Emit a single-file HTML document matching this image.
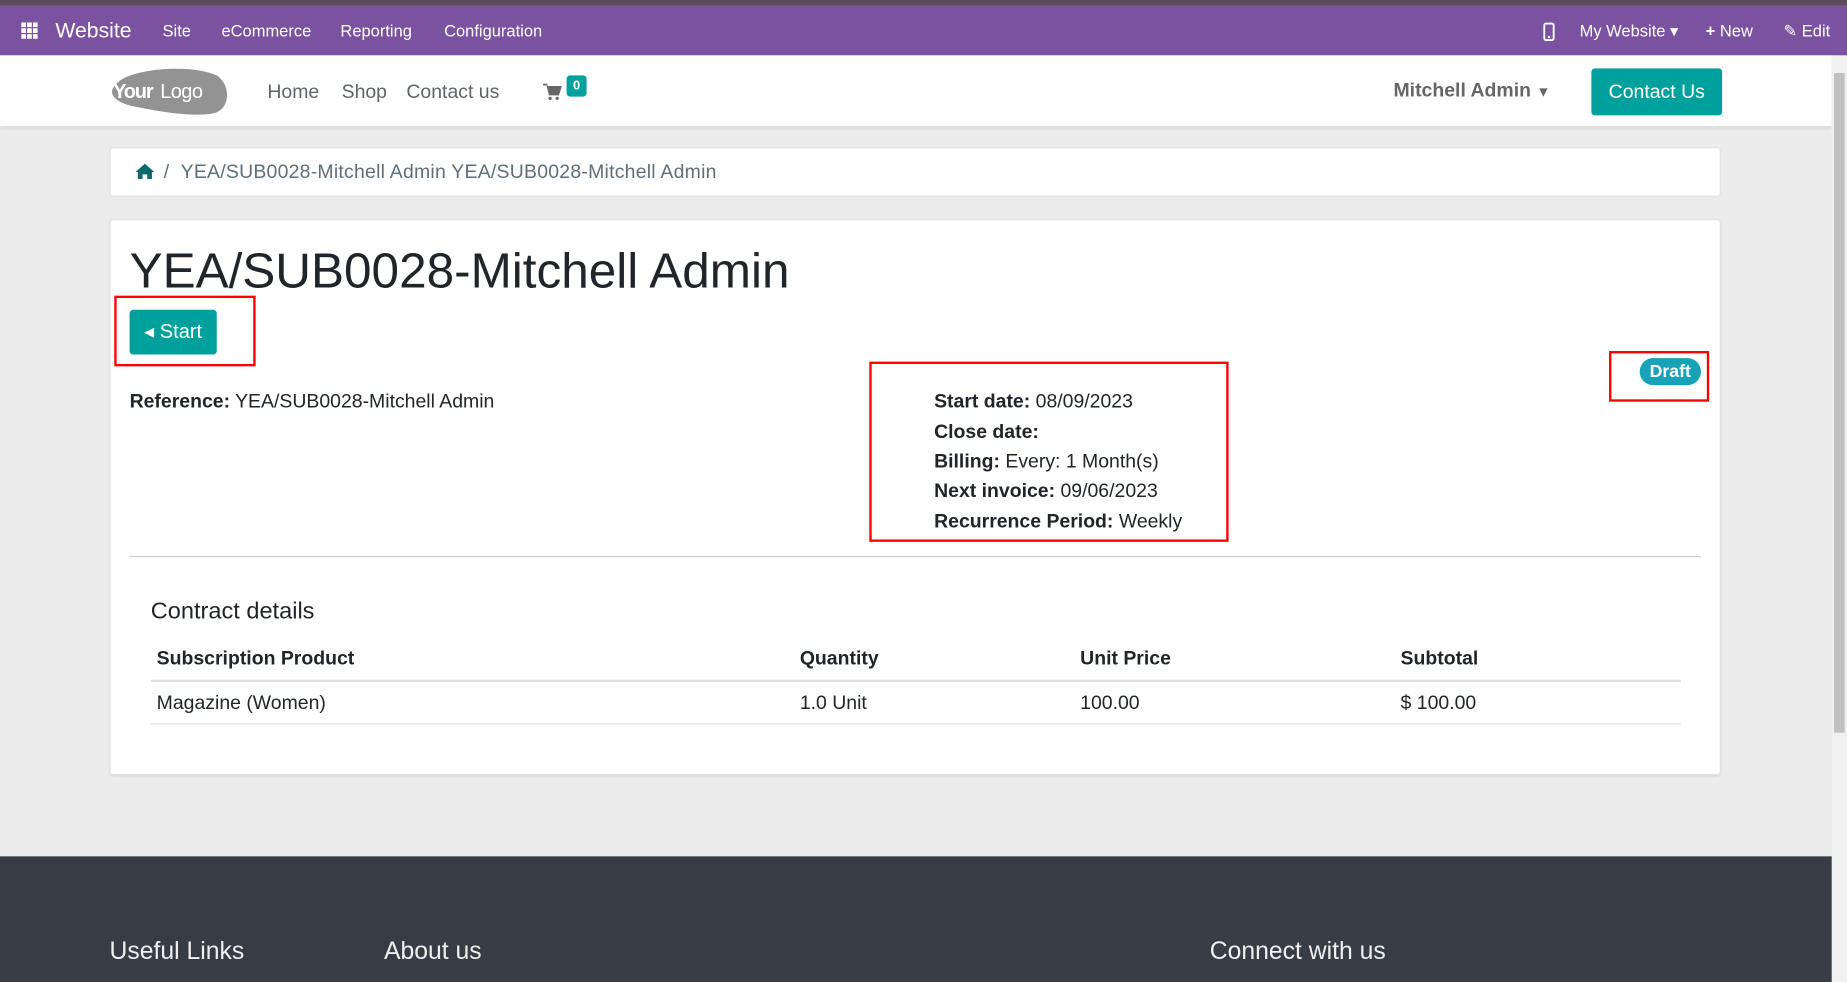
<!DOCTYPE html>
<html><head><meta charset="utf-8"><style>
*{box-sizing:border-box;margin:0;padding:0}
html,body{width:1847px;height:982px;overflow:hidden;background:#ececec}
#w{width:1568px;height:834px;transform:scale(1.17793);transform-origin:0 0;position:relative;font-family:"Liberation Sans",sans-serif;background:#ececec;color:#212529}
.a{position:absolute;white-space:nowrap}
.top{left:0;top:0;width:1568px;height:5px;background:#5b4a5c}
.bar{left:0;top:5px;width:1568px;height:42px;background:#7a52a0;color:#fff;font-size:14px}
.bar .a{top:13px}
.hdr{left:0;top:47px;width:1555px;height:60px;background:#fff;box-shadow:0 2px 3px rgba(0,0,0,.08)}
.sb{left:1555px;top:47px;width:13px;height:787px;background:#f0f0f0}
.sbt{left:1557px;top:62px;width:9px;height:560px;background:#c1c1c1}
.nav{font-size:16.5px;color:#5f636b;top:69px}
.card{background:#fff;border:1px solid #e2e2e2;border-radius:3px}
.red{border:2px solid #f00}
.l{font-size:16.5px;color:#212529}
b{font-weight:bold}
.foot{left:0;top:727px;width:1555px;height:107px;background:#383c44}
.fh{top:796px;font-size:21px;color:#f0f0f0}
</style></head><body><div id="w">
<div class="a top"></div>
<div class="a bar">
 <svg class="a" style="left:18px;top:14px" width="14" height="14" viewBox="0 0 14 14" fill="#fff"><rect x="0" y="0" width="4" height="4"/><rect x="5" y="0" width="4" height="4"/><rect x="10" y="0" width="4" height="4"/><rect x="0" y="5" width="4" height="4"/><rect x="5" y="5" width="4" height="4"/><rect x="10" y="5" width="4" height="4"/><rect x="0" y="10" width="4" height="4"/><rect x="5" y="10" width="4" height="4"/><rect x="10" y="10" width="4" height="4"/></svg>
 <span class="a" style="left:47px;top:11px;font-size:18px">Website</span>
 <span class="a" style="left:138px">Site</span>
 <span class="a" style="left:188px">eCommerce</span>
 <span class="a" style="left:289px">Reporting</span>
 <span class="a" style="left:377px">Configuration</span>
 <svg class="a" style="left:1310px;top:14px" width="10" height="16" viewBox="0 0 10 16"><rect x="1" y="1" width="8" height="14" rx="1.5" fill="none" stroke="#fff" stroke-width="1.6"/><circle cx="5" cy="12.5" r="1" fill="#fff"/></svg>
 <span class="a" style="left:1341px">My Website ▾</span>
 <span class="a" style="left:1448px"><b>+</b> New</span>
 <span class="a" style="left:1514px">✎ Edit</span>
</div>
<div class="a hdr"></div>
<svg class="a" style="left:92px;top:56px" width="103" height="42" viewBox="0 0 103 42"><path d="M8 14 C20 2 70 -2 92 8 C104 16 104 36 90 40 C70 44 40 38 20 34 C4 30 -2 22 8 14Z" fill="#939393"/><text x="4" y="27" font-family="Liberation Sans" font-weight="bold" font-size="17" fill="#fff" letter-spacing="-1">Your</text><text x="44" y="27" font-family="Liberation Sans" font-size="17" fill="#fff" letter-spacing="-0.5">Logo</text></svg>
<span class="a nav" style="left:227px">Home</span>
<span class="a nav" style="left:290px">Shop</span>
<span class="a nav" style="left:345px">Contact us</span>
<svg class="a" style="left:461px;top:71px" width="16" height="14" viewBox="0 0 16 14" fill="#666"><path d="M0 0h3.5l.5 2H16l-2.5 8H5L3 1.5H0z"/><circle cx="6" cy="12.5" r="1.4"/><circle cx="12" cy="12.5" r="1.4"/></svg>
<span class="a" style="left:481px;top:64px;width:17px;height:18px;background:#00a09d;color:#fff;font-size:11px;font-weight:bold;border-radius:3px;text-align:center;line-height:18px">0</span>
<span class="a" style="left:1183px;top:68px;font-size:16.5px;font-weight:bold;color:#666">Mitchell Admin <span style="font-size:12px">▼</span></span>
<span class="a" style="left:1351px;top:58px;width:111px;height:40px;background:#00a09d;border-radius:3px;color:#fff;font-size:16.5px;text-align:center;line-height:40px">Contact Us</span>
<div class="a sb"></div><div class="a sbt"></div>

<div class="a card" style="left:93px;top:125px;width:1368px;height:42px"></div>
<svg class="a" style="left:115px;top:139px" width="16" height="13" viewBox="0 0 16 13" fill="#0b6a6a"><path d="M8 0 L16 7 L14 7 L14 13 L10 13 L10 9 L6 9 L6 13 L2 13 L2 7 L0 7Z"/></svg>
<span class="a" style="left:139px;top:137px;font-size:16.5px;color:#5f6f7a;letter-spacing:0.2px">/ &nbsp;YEA/SUB0028-Mitchell Admin YEA/SUB0028-Mitchell Admin</span>

<div class="a card" style="left:93px;top:186px;width:1368px;height:472px;box-shadow:0 1px 2px rgba(0,0,0,.08)"></div>
<span class="a" style="left:110px;top:206px;font-size:42px;color:#212529">YEA/SUB0028-Mitchell Admin</span>
<div class="a red" style="left:97px;top:251px;width:120px;height:60px"></div>
<span class="a" style="left:110px;top:263px;width:74px;height:38px;background:#00a09d;border-radius:3px;color:#fff;font-size:17px;line-height:38px;text-align:center">◂ Start</span>
<div class="a red" style="left:738px;top:307px;width:305px;height:153px"></div>
<div class="a red" style="left:1366px;top:298px;width:85px;height:43px"></div>
<span class="a" style="left:1392px;top:304px;width:52px;height:23px;background:#17a2b8;border-radius:12px;color:#fff;font-size:15px;font-weight:bold;line-height:23px;text-align:center">Draft</span>
<span class="a l" style="left:110px;top:332px"><b>Reference:</b> YEA/SUB0028-Mitchell Admin</span>
<span class="a l" style="left:793px;top:332px"><b>Start date:</b> 08/09/2023</span>
<span class="a l" style="left:793px;top:358px"><b>Close date:</b></span>
<span class="a l" style="left:793px;top:383px"><b>Billing:</b> Every: 1 Month(s)</span>
<span class="a l" style="left:793px;top:408px"><b>Next invoice:</b> 09/06/2023</span>
<span class="a l" style="left:793px;top:434px"><b>Recurrence Period:</b> Weekly</span>
<div class="a" style="left:110px;top:472px;width:1334px;height:1px;background:#ccc"></div>
<span class="a" style="left:128px;top:508px;font-size:20px">Contract details</span>
<span class="a l" style="left:133px;top:550px;font-weight:bold">Subscription Product</span>
<span class="a l" style="left:679px;top:550px;font-weight:bold">Quantity</span>
<span class="a l" style="left:917px;top:550px;font-weight:bold">Unit Price</span>
<span class="a l" style="left:1189px;top:550px;font-weight:bold">Subtotal</span>
<div class="a" style="left:128px;top:577px;width:1299px;height:2px;background:#dee2e6"></div>
<span class="a l" style="left:133px;top:588px">Magazine (Women)</span>
<span class="a l" style="left:679px;top:588px">1.0 Unit</span>
<span class="a l" style="left:917px;top:588px">100.00</span>
<span class="a l" style="left:1189px;top:588px">$ 100.00</span>
<div class="a" style="left:128px;top:614px;width:1299px;height:1px;background:#dee2e6"></div>

<div class="a foot"></div>
<span class="a fh" style="left:93px">Useful Links</span>
<span class="a fh" style="left:326px">About us</span>
<span class="a fh" style="left:1027px">Connect with us</span>
</div></body></html>
